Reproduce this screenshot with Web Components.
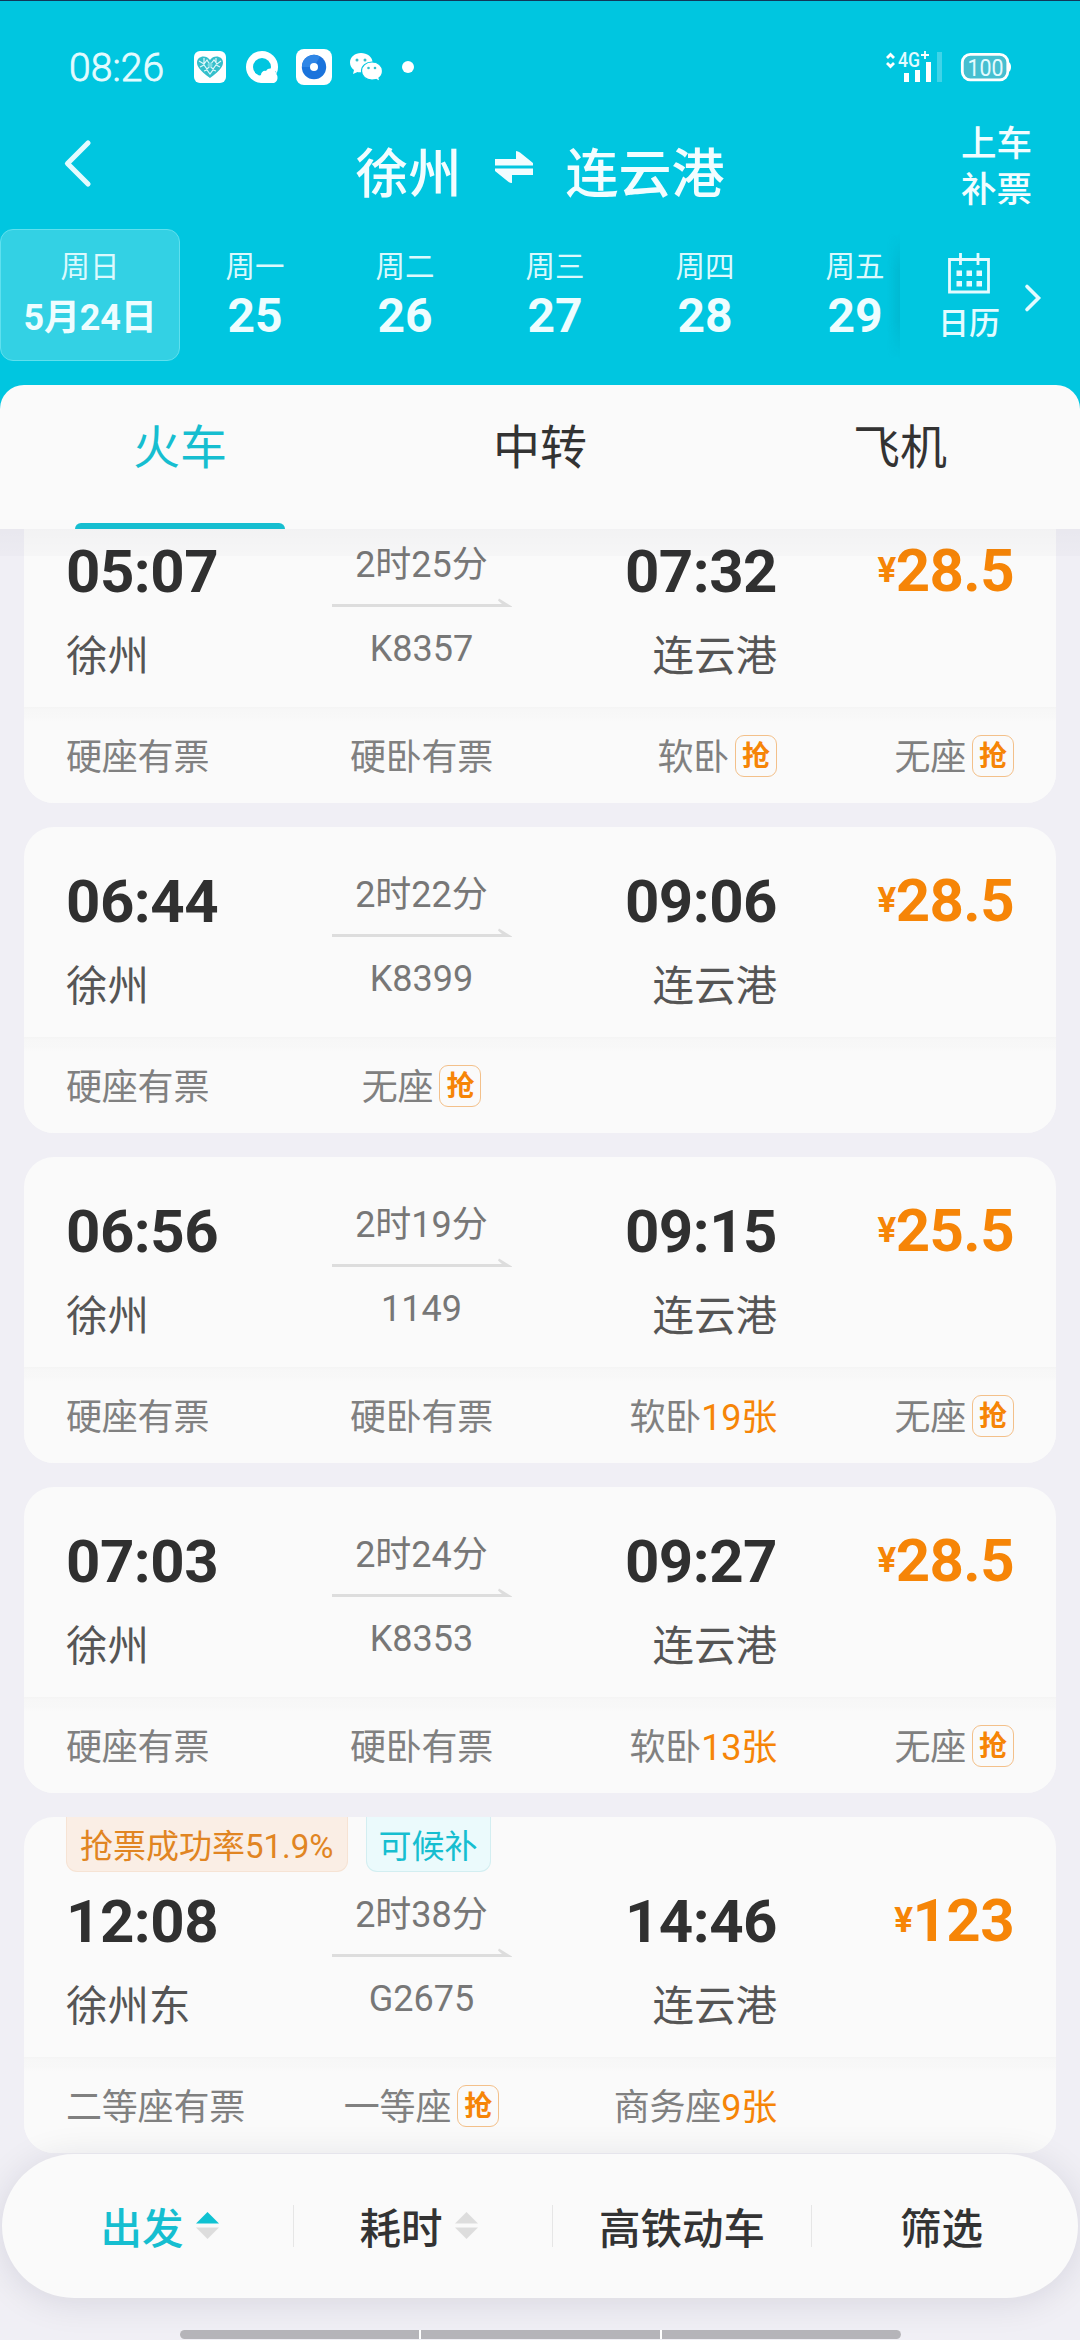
<!DOCTYPE html>
<html lang="zh-CN">
<head>
<meta charset="utf-8">
<title>徐州 - 连云港</title>
<style>
    html, body {
        margin: 0;
        width: 1080px;
        height: 2340px;
        overflow: hidden;
        background: #f0eff5;
        font-family: Roboto, "Noto Sans CJK SC", sans-serif;
        --brand: #00c6e0;
        --accent: #16bed0;
        --orange: #f68507;
        --surface: #fafafa;
        --ink: #333;
    }
</style>
</head>
<body>
<ticket-page>
    <phone-status slot="head" time="08:26" battery="100"></phone-status>
    <route-header slot="head" from="徐州" to="连云港"></route-header>
    <date-strip slot="head">
        <date-cell week="周日" day="5月24日" selected></date-cell>
        <date-cell week="周一" day="25"></date-cell>
        <date-cell week="周二" day="26"></date-cell>
        <date-cell week="周三" day="27"></date-cell>
        <date-cell week="周四" day="28"></date-cell>
        <date-cell week="周五" day="29"></date-cell>
    </date-strip>

    <mode-tabs slot="tabs">
        <mode-tab active>火车</mode-tab>
        <mode-tab>中转</mode-tab>
        <mode-tab>飞机</mode-tab>
    </mode-tabs>

    <train-card depart="05:07" arrive="07:32" from="徐州" to="连云港" duration="2时25分" number="K8357" price="28.5">
        <seat-item name="硬座有票"></seat-item>
        <seat-item name="硬卧有票"></seat-item>
        <seat-item name="软卧" grab></seat-item>
        <seat-item name="无座" grab></seat-item>
    </train-card>
    <train-card depart="06:44" arrive="09:06" from="徐州" to="连云港" duration="2时22分" number="K8399" price="28.5">
        <seat-item name="硬座有票"></seat-item>
        <seat-item name="无座" grab></seat-item>
    </train-card>
    <train-card depart="06:56" arrive="09:15" from="徐州" to="连云港" duration="2时19分" number="1149" price="25.5">
        <seat-item name="硬座有票"></seat-item>
        <seat-item name="硬卧有票"></seat-item>
        <seat-item name="软卧" left="19张"></seat-item>
        <seat-item name="无座" grab></seat-item>
    </train-card>
    <train-card depart="07:03" arrive="09:27" from="徐州" to="连云港" duration="2时24分" number="K8353" price="28.5">
        <seat-item name="硬座有票"></seat-item>
        <seat-item name="硬卧有票"></seat-item>
        <seat-item name="软卧" left="13张"></seat-item>
        <seat-item name="无座" grab></seat-item>
    </train-card>
    <train-card depart="12:08" arrive="14:46" from="徐州东" to="连云港" duration="2时38分" number="G2675" price="123" tagged>
        <train-tag slot="tags" kind="rate">抢票成功率51.9%</train-tag>
        <train-tag slot="tags" kind="wait">可候补</train-tag>
        <seat-item name="二等座有票"></seat-item>
        <seat-item name="一等座" grab></seat-item>
        <seat-item name="商务座" left="9张"></seat-item>
    </train-card>

    <filter-bar slot="bottom">
        <filter-item sort="up">出发</filter-item>
        <filter-item sort="none">耗时</filter-item>
        <filter-item>高铁动车</filter-item>
        <filter-item>筛选</filter-item>
    </filter-bar>
    <home-indicator slot="bottom"></home-indicator>
</ticket-page>

<script>
// Small base: every element renders its markup once into an open shadow root
class BaseElement extends HTMLElement {
    connectedCallback() {
        if (this.shadowRoot) {
            return;
        }
        const root = this.attachShadow({ mode: 'open' });
        root.innerHTML = this.render();
    }

    attr(name) {
        return this.getAttribute(name) || '';
    }
}

class TicketPage extends BaseElement {
    render() {
        return `
            <style>
                :host {
                    display: flex;
                    flex-direction: column;
                    height: 2340px;
                    overflow: hidden;
                }
                header {
                    flex: none;
                    height: 385px;
                    box-sizing: border-box;
                    border-top: 1px solid #10385a;
                    background: var(--brand);
                }
                .tabs {
                    flex: none;
                    height: 144px;
                    background: var(--brand);
                }
                main {
                    flex: 1;
                    min-height: 0;
                    overflow: hidden;
                    display: flex;
                    flex-direction: column;
                    gap: 24px;
                    padding: 0 24px;
                }
                /* the list is scrolled, so the first card starts under the tabs */
                ::slotted(train-card:first-of-type) {
                    margin-top: -32px;
                }
                .shade {
                    position: absolute;
                    left: 0;
                    top: 529px;
                    width: 1080px;
                    height: 27px;
                    background: linear-gradient(rgba(0, 0, 40, .03), rgba(0, 0, 40, .015));
                }
                footer {
                    position: absolute;
                    left: 0;
                    top: 2154px;
                    width: 1080px;
                    height: 186px;
                    display: flex;
                    flex-direction: column;
                    align-items: center;
                    justify-content: space-between;
                }
            </style>
            <header><slot name="head"></slot></header>
            <div class="tabs"><slot name="tabs"></slot></div>
            <main><slot></slot></main>
            <div class="shade"></div>
            <footer><slot name="bottom"></slot></footer>
        `;
    }
}

class PhoneStatus extends BaseElement {
    render() {
        return `
            <style>
                :host {
                    display: flex;
                    align-items: center;
                    height: 130px;
                    box-sizing: border-box;
                    padding: 2px 69px 0 69px;
                    color: #e4fbff;
                }
                .time {
                    width: 125px;
                    font: 300 39px/1 Roboto;
                    letter-spacing: .1px;
                    padding-top: 2px;
                    box-sizing: border-box;
                    -webkit-text-stroke: .8px #e4fbff;
                }
                svg { display: block; flex: none; }
                .space { flex: 1; }
            </style>
            <span class="time">${this.attr('time')}</span>
            <svg width="220" height="40" viewBox="194 46 220 40">
                <rect x="194" y="50" width="32" height="32" rx="6" fill="#fff"/>
                <path d="M210 77C199 69 197 65 197 61.500C197 55 206 53 210 59C214 53 223 55 223 61.500C223 65 221 69 210 77Z" fill="#35bfcb"/>
                <path d="M199 60l5 3 3-4 3 5 4-5 3 4 4-3M200 66l4-2 3 4 3-3 3 3 3-4 4 2M204 70l3-1 3 4 3-4 3 1M204 57v5M216 57v5" stroke="#dff8fa" stroke-width="1.200" fill="none"/>
                <circle cx="210" cy="64" r="2.500" fill="#7edbe2"/>
                <circle cx="262" cy="66" r="16" fill="#fff"/>
                <circle cx="262" cy="66" r="9" fill="#00c6e0"/>
                <path d="M261 74c0-3 3-5 5-4 2-4 9-3 9 2 4 2 3 9-1 10h-11c-6 0-7-6-2-8z" fill="#fff"/>
                <path d="M275 70c1.500 1 1.500 2.500 1.500 3" stroke="#8be3ee" fill="none"/>
                <rect x="296" y="48" width="36" height="36" rx="8" fill="#fff"/>
                <circle cx="314" cy="66" r="12.200" fill="#1a73dc"/>
                <path d="M302 66a12 12 0 0 1 18-10.500l-6 10.500z" fill="#2f86e6"/>
                <circle cx="314" cy="66" r="4" fill="#fff"/>
                <path d="M361 52c-6 0-11 4-11 9.500 0 3 1.500 5.500 4 7.500l-1 4 4.500-2c1 .300 2 .300 4 .300 6 0 11-4.500 11-10s-5.500-9.300-11.500-9.300z" fill="#fff"/>
                <path d="M372 61c-6 0-10.500 4-10.500 9s4.500 9 10.500 9c1.500 0 3-.200 4-.500l4 2-1-3.500c2.300-1.700 3.500-4.200 3.500-7 0-5-4.500-9-10.500-9z" fill="#fff" stroke="#00c6e0" stroke-width="1.200"/>
                <g fill="#35bfcb">
                    <circle cx="357" cy="59" r="1.500"/><circle cx="365" cy="59" r="1.500"/>
                    <circle cx="368.500" cy="67" r="1.300"/><circle cx="375" cy="67" r="1.300"/>
                </g>
                <circle cx="408" cy="66" r="6" fill="#fff"/>
            </svg>
            <span class="space"></span>
            <svg width="127" height="40" viewBox="884 46 127 40">
                <path d="M887 57l3.500-3.500 3.500 3.500M887 62l3.500 3.500 3.500-3.500" stroke="#fff" stroke-width="2.800" fill="none"/>
                <text x="898" y="66" font-family="Roboto" font-size="21" font-weight="500" textLength="22" lengthAdjust="spacingAndGlyphs" fill="#e4fbff">4G</text>
                <path d="M921 54h8M925 50v8" stroke="#fff" stroke-width="1.800"/>
                <path d="M904 72h5v9h-5zM915 69h5v12h-5zM926 61h5v20h-5z" fill="#fff"/>
                <path d="M937 51h5v30h-5z" fill="#fff" opacity=".25"/>
                <rect x="962.300" y="53.300" width="45.500" height="25.500" rx="8" fill="#46bfd0" stroke="#fff" stroke-width="2.800"/>
                <path d="M1008.500 61q2.500 1 2.500 5t-2.500 5z" fill="#fff"/>
                <text x="985.500" y="74.500" font-family="Roboto" font-size="23" font-weight="400" text-anchor="middle" textLength="36" lengthAdjust="spacingAndGlyphs" fill="#e4fbff">${this.attr('battery')}</text>
            </svg>
        `;
    }
}

class RouteHeader extends BaseElement {
    render() {
        return `
            <style>
                :host {
                    display: grid;
                    grid-template-columns: 240px 1fr 240px;
                    height: 98px;
                    color: #f2fdff;
                }
                svg { display: block; }
                .back { margin: 8px 0 0 63px; }
                .title {
                    display: flex;
                    justify-content: center;
                    align-items: center;
                    gap: 33px;
                    height: 80px;
                    padding-top: 4px;
                    font-size: 53px;
                    font-weight: 500;
                    line-height: 80px;
                    white-space: nowrap;
                }
                .title svg { margin-bottom: 16px; }
                .board {
                    justify-self: end;
                    margin: -9px 47px 0 0;
                    width: 72px;
                    font-size: 35.5px;
                    font-weight: 500;
                    line-height: 45.5px;
                }
            </style>
            <svg class="back" width="30" height="50" viewBox="0 0 30 50"><path d="M25 4L4.500 24.500 25 45" fill="none" stroke="#e4fbff" stroke-width="5.200" stroke-linecap="round" stroke-linejoin="round"/></svg>
            <div class="title">
                <span>${this.attr('from')}</span>
                <svg width="38" height="32" viewBox="0 0 38 32"><path d="M0 8h21V0q2 0 4 1.500L38 12v2.500H0zM0 17.500h38V24H17v8q-2 0-4-1.500L0 20z" fill="#f2fdff"/></svg>
                <span>${this.attr('to')}</span>
            </div>
            <div class="board">上车补票</div>
        `;
    }
}

class DateStrip extends BaseElement {
    render() {
        return `
            <style>
                :host {
                    display: grid;
                    grid-template-columns: 900px 180px;
                    height: 132px;
                    color: #e4fbff;
                }
                .days {
                    display: flex;
                    overflow: hidden;
                    position: relative;
                }
                .days::after {
                    content: "";
                    position: absolute;
                    right: 0;
                    top: 4px;
                    width: 13px;
                    height: 126px;
                    background: linear-gradient(to right, rgba(0, 130, 150, 0), rgba(0, 130, 150, .18));
                    -webkit-mask: linear-gradient(transparent, #000 30%, #000 70%, transparent);
                }
                .more {
                    display: flex;
                    gap: 24px;
                    padding-left: 38px;
                }
                .cal {
                    display: flex;
                    flex-direction: column;
                    align-items: center;
                    gap: 8px;
                    padding-top: 23px;
                    font-size: 31px;
                    font-weight: 500;
                    line-height: 44px;
                }
                svg { display: block; }
                .next { margin-top: 54px; }
            </style>
            <div class="days"><slot></slot></div>
            <div class="more">
                <div class="cal">
                    <svg width="42" height="42" viewBox="0 0 42 42">
                        <path d="M1.500 7.500h39v32.500h-39zM12.500 1v12M30 1v12" fill="none" stroke="#e4fbff" stroke-width="2.800"/>
                        <path d="M8.500 18.500h5.500v5.500h-5.500zM18.500 18.500h5.500v5.500h-5.500zM28.500 18.500h5.500v5.500h-5.500zM8.500 29h5.500v5.500h-5.500zM18.500 29h5.500v5.500h-5.500zM28.500 29h5.500v5.500h-5.500z" fill="#e4fbff"/>
                    </svg>
                    <span>日历</span>
                </div>
                <svg class="next" width="18" height="30" viewBox="0 0 18 30"><path d="M3 3.500L14.500 15 3 26.500" fill="none" stroke="#e4fbff" stroke-width="3.600" stroke-linecap="round"/></svg>
            </div>
        `;
    }
}

class DateCell extends BaseElement {
    render() {
        return `
            <style>
                :host {
                    flex: none;
                    width: 150px;
                    height: 132px;
                    box-sizing: border-box;
                    padding-top: 18px;
                    display: flex;
                    flex-direction: column;
                    align-items: center;
                    color: #eefdff;
                }
                :host([selected]) {
                    width: 180px;
                    border: 1px solid #5fe0ee;
                    border-radius: 13px;
                    background: #33d1e4;
                    padding-top: 17px;
                }
                .week {
                    font-size: 29.5px;
                    line-height: 40px;
                    color: #dcf9fd;
                }
                .day {
                    font-size: 48px;
                    line-height: 58px;
                    font-weight: 700;
                }
                :host([selected]) .day {
                    font-size: 36px;
                    line-height: 62px;
                    letter-spacing: -.2px;
                }
            </style>
            <span class="week">${this.attr('week')}</span>
            <span class="day">${this.attr('day')}</span>
        `;
    }
}

class ModeTabs extends BaseElement {
    render() {
        return `
            <style>
                :host {
                    display: grid;
                    grid-template-columns: repeat(3, 1fr);
                    height: 144px;
                    background: var(--surface);
                    border-radius: 24px 24px 0 0;
                }
            </style>
            <slot></slot>
        `;
    }
}

class ModeTab extends BaseElement {
    render() {
        return `
            <style>
                :host {
                    display: flex;
                    flex-direction: column;
                    align-items: center;
                    justify-content: space-between;
                    padding-top: 28px;
                    color: var(--ink);
                    font-size: 47px;
                    line-height: 70px;
                }
                :host([active]) { color: var(--accent); }
                i {
                    width: 210px;
                    height: 6px;
                    border-radius: 6px 6px 0 0;
                }
                :host([active]) i { background: var(--accent); }
            </style>
            <span><slot></slot></span><i></i>
        `;
    }
}

class TrainCard extends BaseElement {
    render() {
        return `
            <style>
                :host {
                    display: block;
                    flex: none;
                    height: 306px;
                    border-radius: 30px;
                    background: var(--surface);
                    overflow: hidden;
                }
                :host([tagged]) { height: 336px; }
                .tags {
                    display: none;
                    gap: 18px;
                    height: 55px;
                    padding-left: 42px;
                    margin-bottom: -25px;
                }
                :host([tagged]) .tags { display: flex; }
                .info {
                    display: grid;
                    grid-template-columns: repeat(4, 237px);
                    padding: 0 42px;
                    height: 210px;
                }
                .time {
                    margin-top: 39px;
                    font-size: 60px;
                    font-weight: 700;
                    line-height: 72px;
                    letter-spacing: -.5px;
                    color: #303030;
                }
                .city {
                    margin-top: 18px;
                    font-size: 41.5px;
                    line-height: 62px;
                    color: #555;
                }
                .mid {
                    text-align: center;
                    font-size: 36px;
                    line-height: 52px;
                    color: #777;
                    padding-top: 42px;
                }
                .mid svg { display: block; margin: 7px auto 15px 29px; }
                .end { text-align: right; }
                .price {
                    margin-top: 38px;
                    text-align: right;
                    font-size: 60px;
                    font-weight: 700;
                    line-height: 72px;
                    letter-spacing: -.6px;
                    color: var(--orange);
                }
                .price small {
                    font-size: 35px;
                    vertical-align: 9px;
                    line-height: 1;
                }
                .seats {
                    display: grid;
                    grid-template-columns: repeat(4, 237px);
                    padding: 0 42px;
                    height: 96px;
                    background: linear-gradient(#f4f4f4, #f7f7f7 3px, #f8f8f8 11px, #fafafa 14px);
                    align-items: center;
                }
                ::slotted(seat-item:nth-of-type(2)) { justify-self: center; }
                ::slotted(seat-item:nth-of-type(n+3)) { justify-self: end; }
            </style>
            <div class="tags"><slot name="tags"></slot></div>
            <div class="info">
                <div>
                    <div class="time">${this.attr('depart')}</div>
                    <div class="city">${this.attr('from')}</div>
                </div>
                <div class="mid">
                    <div>${this.attr('duration')}</div>
                    <svg width="180" height="10" viewBox="0 0 180 10"><path d="M0 6h170l-4-3.500 1-2L180 8.500V9H0z" fill="#ddd"/></svg>
                    <div>${this.attr('number')}</div>
                </div>
                <div class="end">
                    <div class="time">${this.attr('arrive')}</div>
                    <div class="city">${this.attr('to')}</div>
                </div>
                <div class="price"><small>¥</small>${this.attr('price')}</div>
            </div>
            <div class="seats"><slot></slot></div>
        `;
    }
}

class TrainTag extends BaseElement {
    render() {
        return `
            <style>
                :host {
                    height: 55px;
                    box-sizing: border-box;
                    padding: 0 13px;
                    border: 1px solid;
                    border-top: none;
                    border-radius: 0 0 11px 11px;
                    font-size: 33px;
                    line-height: 60px;
                    white-space: nowrap;
                }
                :host([kind=rate]) {
                    background: #faeee5;
                    border-color: #f6e3d4;
                    color: #e18522;
                }
                :host([kind=wait]) {
                    padding: 0 12px;
                    background: #ebfafc;
                    border-color: #d3eef1;
                    color: var(--accent);
                }
            </style>
            <slot></slot>
        `;
    }
}

class SeatItem extends BaseElement {
    render() {
        const left = this.attr('left');
        return `
            <style>
                :host {
                    display: flex;
                    align-items: center;
                    height: 60px;
                    margin-top: 6px;
                    font-size: 36px;
                    line-height: 60px;
                    letter-spacing: -.2px;
                    color: #808080;
                }
                .left { color: var(--orange); }
                .grab {
                    width: 40px;
                    height: 40px;
                    margin: -4px 0 0 6px;
                    border: 1px solid #f3c08a;
                    border-radius: 9px;
                    color: var(--orange);
                    font-size: 28px;
                    font-weight: 700;
                    line-height: 41px;
                    text-align: center;
                }
            </style>
            <span>${this.attr('name')}</span>
            ${left ? `<span class="left">${left}</span>` : ''}
            ${this.hasAttribute('grab') ? '<span class="grab">抢</span>' : ''}
        `;
    }
}

class FilterBar extends BaseElement {
    render() {
        return `
            <style>
                :host {
                    display: grid;
                    grid-template-columns: repeat(4, 259px);
                    width: 1076px;
                    height: 144px;
                    box-sizing: border-box;
                    padding-left: 33px;
                    border-radius: 72px;
                    background: var(--surface);
                    align-items: center;
                    box-shadow: 0 4px 36px rgba(20, 20, 50, .11);
                }
                ::slotted(filter-item:not(:last-child)) { border-right: 1px solid #e6e6e6; }
            </style>
            <slot></slot>
        `;
    }
}

class FilterItem extends BaseElement {
    render() {
        const sort = this.attr('sort');
        const up = sort === 'up' ? '#0fc2d2' : '#ddd';
        const arrows = `
            <svg width="23" height="28" viewBox="0 0 23 28">
                <path d="M11.500 0L23 11.500H0z" fill="${up}"/>
                <path d="M0 15.500h23L11.500 27z" fill="#ddd"/>
            </svg>`;
        return `
            <style>
                :host {
                    display: flex;
                    align-items: center;
                    justify-content: center;
                    gap: 12px;
                    height: 42px;
                    color: var(--ink);
                    font-size: 41.5px;
                    font-weight: 500;
                    line-height: 42px;
                    box-sizing: border-box;
                }
                :host([sort]) { padding-right: 9px; }
                :host([sort=up]) { color: var(--accent); }
                span { margin-top: 8px; }
                svg { flex: none; }
            </style>
            <span><slot></slot></span>${sort ? arrows : ''}
        `;
    }
}

class HomeIndicator extends BaseElement {
    render() {
        return `
            <style>
                :host {
                    display: flex;
                    gap: 2px;
                    width: 721px;
                    height: 9px;
                    margin-bottom: 1px;
                    border-radius: 5px;
                    overflow: hidden;
                    background: #fff;
                }
                i { flex: 1; background: #b5b4b9; }
            </style>
            <i></i><i></i><i></i>
        `;
    }
}

customElements.define('ticket-page', TicketPage);
customElements.define('phone-status', PhoneStatus);
customElements.define('route-header', RouteHeader);
customElements.define('date-strip', DateStrip);
customElements.define('date-cell', DateCell);
customElements.define('mode-tabs', ModeTabs);
customElements.define('mode-tab', ModeTab);
customElements.define('train-card', TrainCard);
customElements.define('train-tag', TrainTag);
customElements.define('seat-item', SeatItem);
customElements.define('filter-bar', FilterBar);
customElements.define('filter-item', FilterItem);
customElements.define('home-indicator', HomeIndicator);
</script>
</body>
</html>
